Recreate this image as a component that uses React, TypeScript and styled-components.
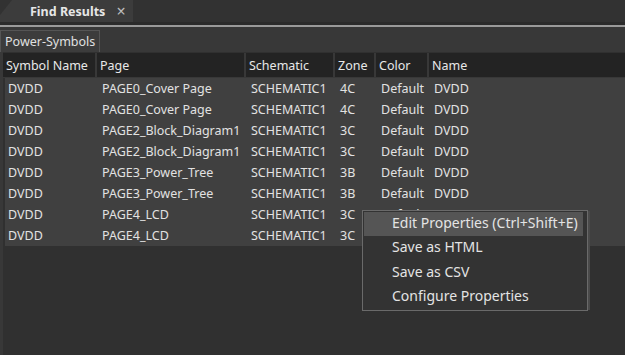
import React from "react";
import styled, { createGlobalStyle } from "styled-components";

const Global = createGlobalStyle`
  html, body { margin: 0; padding: 0; background: #333333; }
  body { font-family: "Noto Sans", "Open Sans", sans-serif; }
`;

const Page = styled.div`
  position: relative;
  width: 625px;
  height: 355px;
  background: #383838;
  display: flex;
  flex-direction: column;
  overflow: hidden;
`;

const TabBar = styled.div`
  height: 22px;
  background: #323232;
  display: flex;
  align-items: stretch;
`;

const Tab = styled.div`
  width: 133px;
  background: #3c3c3c;
  clip-path: polygon(12px 0, 100% 0, 100% 100%, 0 100%, 0 15px);
  display: flex;
  align-items: center;
  padding-left: 30px;
  box-sizing: border-box;
  gap: 11px;
  color: #e6e6e6;
  font-weight: 700;
  font-size: 12.5px;
`;

const Close = styled.span`
  color: #bdbdbd;
  font-weight: 400;
  font-size: 16px;
  line-height: 1;
`;

const Separator = styled.div`
  height: 5px;
  background: #2b2b2b;
  border-bottom: 2px solid #9a9a9a;
  box-sizing: border-box;
`;

const SubTabBar = styled.div`
  height: 25px;
  padding-top: 3px;
  box-sizing: border-box;
  display: flex;
  align-items: stretch;
`;

const SubTab = styled.div`
  width: 100px;
  border: 1px solid #555555;
  border-bottom: none;
  background: #3c3c3c;
  box-sizing: border-box;
  color: #e0e0e0;
  font-size: 12.5px;
  padding-left: 4px;
  display: flex;
  align-items: center;
  white-space: nowrap;
`;

const Table = styled.div`
  flex: 1;
  display: flex;
  flex-direction: column;
  background: #303030;
  border-left: 3px solid #383838;
  padding-top: 1px;
`;

const HeaderRow = styled.div`
  display: grid;
  grid-template-columns: 92px 147px 87px 39px 51px 1fr;
  column-gap: 2px;
  height: 24px;
  background: #383838;
  padding-bottom: 1px;
`;

const HeaderCell = styled.div`
  background: #232323;
  color: #e8e8e8;
  font-size: 12.5px;
  padding-left: 3px;
  display: flex;
  align-items: center;
  white-space: nowrap;
`;

const Body = styled.div`
  margin-left: 2px;
  background: #404040;
`;

const Row = styled.div`
  display: grid;
  grid-template-columns: 92px 149px 89px 41px 53px 1fr;
  height: 21px;
  align-items: center;
`;

const Cell = styled.div<{ $first?: boolean }>`
  color: #e2e2e2;
  font-size: 12.5px;
  padding-left: ${(p) => (p.$first ? "3px" : "5px")};
  white-space: nowrap;
`;

const Menu = styled.div`
  position: absolute;
  left: 362px;
  top: 210px;
  width: 226px;
  height: 101px;
  box-sizing: border-box;
  background: #333333;
  border: 1px solid #6a6a6a;
  padding: 1px;
  display: flex;
  flex-direction: column;
  box-shadow: 3px 0 0 -1px #4a4a4a;
`;

const MenuItem = styled.div<{ $active?: boolean }>`
  height: 24.3px;
  flex: none;
  box-sizing: border-box;
  padding-bottom: 3px;
  display: flex;
  align-items: center;
  padding-left: 28px;
  font-size: 14px;
  color: #e4e4e4;
  white-space: nowrap;
  background: ${(p) => (p.$active ? "#555555" : "transparent")};
  margin-right: ${(p) => (p.$active ? "3px" : "0")};
`;

const headers = ["Symbol Name", "Page", "Schematic", "Zone", "Color", "Name"];
const rows: string[][] = [
  ["DVDD", "PAGE0_Cover Page", "SCHEMATIC1", "4C", "Default", "DVDD"],
  ["DVDD", "PAGE0_Cover Page", "SCHEMATIC1", "4C", "Default", "DVDD"],
  ["DVDD", "PAGE2_Block_Diagram1", "SCHEMATIC1", "3C", "Default", "DVDD"],
  ["DVDD", "PAGE2_Block_Diagram1", "SCHEMATIC1", "3C", "Default", "DVDD"],
  ["DVDD", "PAGE3_Power_Tree", "SCHEMATIC1", "3B", "Default", "DVDD"],
  ["DVDD", "PAGE3_Power_Tree", "SCHEMATIC1", "3B", "Default", "DVDD"],
  ["DVDD", "PAGE4_LCD", "SCHEMATIC1", "3C", "Default", "DVDD"],
  ["DVDD", "PAGE4_LCD", "SCHEMATIC1", "3C", "Default", "DVDD"],
];

const menuItems = [
  "Edit Properties (Ctrl+Shift+E)",
  "Save as HTML",
  "Save as CSV",
  "Configure Properties",
];

export default function App() {
  return (
    <Page>
      <Global />
      <TabBar>
        <Tab>
          Find Results<Close>×</Close>
        </Tab>
      </TabBar>
      <Separator />
      <SubTabBar>
        <SubTab>Power-Symbols</SubTab>
      </SubTabBar>
      <Table>
        <HeaderRow>
          {headers.map((h) => (
            <HeaderCell key={h}>{h}</HeaderCell>
          ))}
        </HeaderRow>
        <Body>
          {rows.map((r, i) => (
            <Row key={i}>
              {r.map((c, j) => (
                <Cell key={j} $first={j === 0}>
                  {c}
                </Cell>
              ))}
            </Row>
          ))}
        </Body>
      </Table>
      <Menu>
        {menuItems.map((m, i) => (
          <MenuItem key={m} $active={i === 0}>
            {m}
          </MenuItem>
        ))}
      </Menu>
    </Page>
  );
}
